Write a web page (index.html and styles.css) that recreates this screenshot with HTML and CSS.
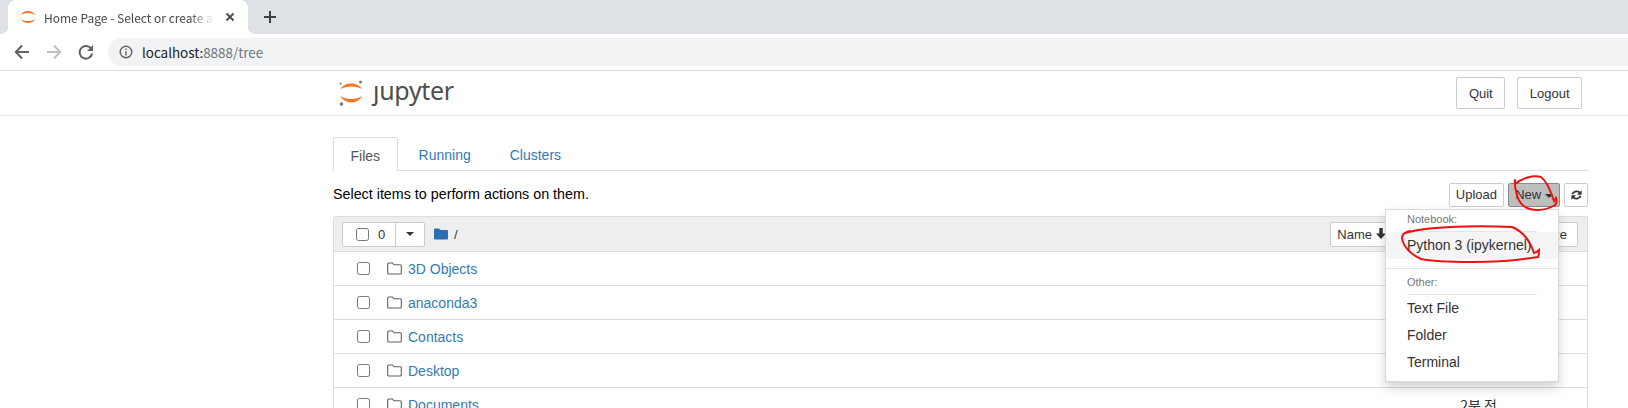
FILE: index.html
```html
<!DOCTYPE html>
<html lang="en">
<head>
  <meta charset="UTF-8">
  <title>Home Page - Select or create a notebook</title>
  <link rel="stylesheet" href="styles.css">
</head>
<body>
  <div class="tab-strip">
    <div class="browser-tab">
      <svg class="favicon" width="16" height="16" viewBox="0 0 16 16">
        <path d="M.8 6C3 .8 13 .8 15.200 6C12 3.300 4 3.300 .8 6Z" fill="#f37726"/>
        <path d="M.8 10C3 15.200 13 15.200 15.200 10C12 12.700 4 12.700 .8 10Z" fill="#f37726"/>
      </svg>
      <span class="browser-tab-title">Home Page - Select or create a notebook</span>
      <svg class="tab-close" width="10" height="10" viewBox="0 0 10 10">
        <path d="M1.500 1.500L8.500 8.500M8.500 1.500L1.500 8.500" stroke="#45494d" stroke-width="1.800"/>
      </svg>
    </div>
    <svg class="new-tab" width="14" height="14" viewBox="0 0 14 14">
      <path d="M7 1V13M1 7H13" stroke="#3c4043" stroke-width="2"/>
    </svg>
  </div>

  <div class="toolbar">
    <svg class="nav-icon" width="16" height="16" viewBox="0 0 16 16">
      <path d="M15 8H2M8 1.500L1.800 8L8 14.500" fill="none" stroke="#5f6368" stroke-width="2"/>
    </svg>
    <svg class="nav-icon" width="16" height="16" viewBox="0 0 16 16">
      <path d="M1 8H14M8 1.500L14.200 8L8 14.500" fill="none" stroke="#bdc1c6" stroke-width="2"/>
    </svg>
    <svg class="nav-icon nav-icon-last" width="16" height="16" viewBox="0 0 16 16">
      <path d="M13.500 5.200A6.300 6.300 0 1 0 14.200 9.500" fill="none" stroke="#5f6368" stroke-width="2"/>
      <path d="M15 1V7H9Z" fill="#5f6368"/>
    </svg>
    <div class="address-bar">
      <svg width="14" height="14" viewBox="0 0 14 14">
        <circle cx="7" cy="7" r="5.800" fill="none" stroke="#5f6368" stroke-width="1.400"/>
        <path d="M7 6.200V10.500M7 3.600V5" stroke="#5f6368" stroke-width="1.400"/>
      </svg>
      <span class="url"><span class="url-host">localhost:</span>8888/tree</span>
    </div>
  </div>

  <header class="site-header">
    <div class="logo">
      <svg width="28" height="30" viewBox="0 0 28 30">
        <path d="M2.500 11C6 3.500 20 3.500 24 11C19 7.500 7.500 7.500 2.500 11Z" fill="#f37726"/>
        <path d="M2.500 18C6.500 26.500 20 26.500 24 18C19 22 7.500 22 2.500 18Z" fill="#f37726"/>
        <circle cx="22.500" cy="4" r="1.500" fill="#767677"/>
        <circle cx="2.500" cy="5.500" r="1" fill="#767677"/>
        <circle cx="3.500" cy="26" r="1.800" fill="#767677"/>
      </svg>
      <span class="logo-text">ȷupyter</span>
    </div>
    <div class="header-buttons">
      <button class="btn btn-header">Quit</button>
      <button class="btn btn-header">Logout</button>
    </div>
  </header>

  <main class="page">
    <nav class="tabs">
      <a class="tab tab-active">Files</a>
      <a class="tab">Running</a>
      <a class="tab">Clusters</a>
    </nav>

    <div class="actions">
      <span class="actions-hint">Select items to perform actions on them.</span>
      <div class="action-buttons">
        <button class="btn btn-small btn-upload">Upload</button>
        <button class="btn btn-small btn-new">New <i class="caret"></i></button>
        <button class="btn btn-small btn-refresh">
          <svg width="16" height="16" viewBox="0 0 14 14">
            <path d="M1.800 6C3 2 9 1 11.500 4.500M12.200 8C11 12 5 13 2.500 9.500" fill="none" stroke="#333" stroke-width="2.400"/>
            <path d="M13.500 .8V6.800H7.500ZM.5 13.200V7.200H6.500Z" fill="#333"/>
          </svg>
        </button>
      </div>
    </div>

    <section class="file-list">
      <div class="list-header">
        <div class="select-group">
          <span class="select-count"><i class="check"></i>0</span>
          <span class="select-caret"><i class="caret"></i></span>
        </div>
        <svg width="14" height="12" viewBox="0 0 14 12">
          <path d="M0 1.500Q0 .5 1 .5H5L6.500 2H13Q14 2 14 3V10.500Q14 11.500 13 11.500H1Q0 11.500 0 10.500Z" fill="#2b6fb0"/>
        </svg>
        <span class="crumb">/</span>
        <div class="sort-buttons">
          <button class="btn btn-sort btn-name">Name
            <svg width="10" height="11" viewBox="0 0 10 11">
              <path d="M3.300 0H6.700V5.500H10L5 11L0 5.500H3.300Z" fill="#333"/>
            </svg>
          </button>
          <button class="btn btn-sort btn-modified"></button>
          <button class="btn btn-sort">File size</button>
        </div>
      </div>

      <div class="row"><i class="check"></i><svg class="folder" width="15" height="13" viewBox="0 0 15 13"><path d="M.7 2Q.7 1 1.700 1H5.500L7 2.800H13.300Q14.300 2.800 14.300 3.800V11Q14.300 12 13.300 12H1.700Q.7 12 .7 11Z" fill="none" stroke="#5f5f5f" stroke-width="1.100"/></svg><a class="file-link">3D Objects</a></div>
      <div class="row"><i class="check"></i><svg class="folder" width="15" height="13" viewBox="0 0 15 13"><path d="M.7 2Q.7 1 1.700 1H5.500L7 2.800H13.300Q14.300 2.800 14.300 3.800V11Q14.300 12 13.300 12H1.700Q.7 12 .7 11Z" fill="none" stroke="#5f5f5f" stroke-width="1.100"/></svg><a class="file-link">anaconda3</a></div>
      <div class="row"><i class="check"></i><svg class="folder" width="15" height="13" viewBox="0 0 15 13"><path d="M.7 2Q.7 1 1.700 1H5.500L7 2.800H13.300Q14.300 2.800 14.300 3.800V11Q14.300 12 13.300 12H1.700Q.7 12 .7 11Z" fill="none" stroke="#5f5f5f" stroke-width="1.100"/></svg><a class="file-link">Contacts</a></div>
      <div class="row"><i class="check"></i><svg class="folder" width="15" height="13" viewBox="0 0 15 13"><path d="M.7 2Q.7 1 1.700 1H5.500L7 2.800H13.300Q14.300 2.800 14.300 3.800V11Q14.300 12 13.300 12H1.700Q.7 12 .7 11Z" fill="none" stroke="#5f5f5f" stroke-width="1.100"/></svg><a class="file-link">Desktop</a></div>
      <div class="row"><i class="check"></i><svg class="folder" width="15" height="13" viewBox="0 0 15 13"><path d="M.7 2Q.7 1 1.700 1H5.500L7 2.800H13.300Q14.300 2.800 14.300 3.800V11Q14.300 12 13.300 12H1.700Q.7 12 .7 11Z" fill="none" stroke="#5f5f5f" stroke-width="1.100"/></svg><a class="file-link">Documents</a><span class="modified">2분 전</span></div>
    </section>

    <div class="new-menu">
      <div class="menu-label">Notebook:</div>
      <div class="menu-item menu-item-hover">Python 3 (ipykernel)</div>
      <div class="menu-divider"></div>
      <div class="menu-label menu-label-other">Other:</div>
      <div class="menu-item">Text File</div>
      <div class="menu-item">Folder</div>
      <div class="menu-item">Terminal</div>
    </div>
  </main>

  <!-- red marker scribbles on top of the screenshot -->
  <svg class="scribble" width="1628" height="408" viewBox="0 0 1628 408">
    <path d="M1515 184C1522 178 1533 175 1541 177C1547 181 1551 192 1554 201L1556 198C1557 201 1557 203 1555 205C1550 208 1545 210 1538 210C1528 210 1521 206 1518 198C1516 192 1514 186 1515 180" fill="none" stroke="#f01010" stroke-width="2" stroke-linecap="round"/>
    <path d="M1405 233C1425 227 1470 225 1512 227C1522 231 1530 241 1534 253C1536 253 1537 252 1539 250C1539 253 1539 255 1538 257C1520 260 1495 262 1472 262C1450 262 1430 261 1421 259C1410 254 1403 246 1402 238C1402 234 1405 232 1410 231" fill="none" stroke="#f01010" stroke-width="2" stroke-linecap="round"/>
  </svg>
</body>
</html>
```

FILE: styles.css
```css
html, body {
  margin: 0;
  height: 408px;
  overflow: hidden;
  background: #fff;
}
body {
  font-family: "Liberation Sans", Arial, sans-serif;
  font-size: 14px;
  color: #333;
}
button {
  font-family: inherit;
}

/* browser chrome */
.tab-strip {
  height: 34px;
  background: #dee1e6;
  display: flex;
  align-items: flex-end;
  padding-left: 8px;
}
.browser-tab {
  position: relative;
  width: 240px;
  height: 34px;
  box-sizing: border-box;
  background: #fff;
  border-radius: 8px 8px 0 0;
  display: flex;
  align-items: center;
  padding: 0 13px 0 12px;
}
.browser-tab::before,
.browser-tab::after {
  content: "";
  position: absolute;
  bottom: 0;
  width: 8px;
  height: 8px;
}
.browser-tab::before {
  left: -8px;
  background: radial-gradient(circle at 0 0, #dee1e6 8px, #fff 8.500px);
}
.browser-tab::after {
  right: -8px;
  background: radial-gradient(circle at 100% 0, #dee1e6 8px, #fff 8.500px);
}
.favicon {
  flex: none;
}
.browser-tab-title {
  flex: 1;
  min-width: 0;
  margin-left: 8px;
  font-family: "Noto Sans CJK KR", "Noto Sans", sans-serif;
  font-size: 12px;
  color: #45494d;
  white-space: nowrap;
  overflow: hidden;
  -webkit-mask-image: linear-gradient(to right, #000 85%, transparent 100%);
  mask-image: linear-gradient(to right, #000 85%, transparent 100%);
}
.tab-close {
  flex: none;
  margin-left: 10px;
}
.new-tab {
  margin: 0 0 10px 15px;
}
.toolbar {
  height: 37px;
  box-sizing: border-box;
  border-bottom: 1px solid #dadce0;
  display: flex;
  align-items: center;
  padding: 0 0 1px 14px;
}
.nav-icon {
  margin-right: 16px;
}
.nav-icon-last {
  margin-right: 14px;
}
.address-bar {
  flex: 1;
  height: 28px;
  background: #f1f3f4;
  border-radius: 14px 0 0 14px;
  display: flex;
  align-items: center;
  padding-left: 11px;
  gap: 9px;
}
.url {
  font-family: "Noto Sans CJK KR", "Noto Sans", sans-serif;
  font-size: 13.400px;
  color: #70757a;
}
.url-host {
  color: #202124;
}

/* notebook header */
.site-header {
  height: 44px;
  border-bottom: 1px solid #e7e7e7;
  display: flex;
  align-items: center;
  justify-content: space-between;
  padding: 0 46px 0 338px;
}
.logo {
  display: flex;
  align-items: center;
  gap: 7px;
}
.logo-text {
  font-family: "Noto Sans", sans-serif;
  font-size: 25px;
  letter-spacing: -.3px;
  line-height: 30px;
  color: #4e4e4e;
  margin-top: -6px;
}
.header-buttons {
  display: flex;
  gap: 12px;
}
.btn {
  background: #fff;
  border: 1px solid #ccc;
  border-radius: 2px;
  color: #333;
  font-size: 13px;
  padding: 0;
}
.btn-header {
  height: 32px;
  padding: 0 11.500px;
}

/* main content */
.page {
  position: relative;
  width: 1255px;
  margin-left: 333px;
  padding-top: 21px;
}
.tabs {
  display: flex;
  height: 33px;
  border-bottom: 1px solid #ddd;
}
.tab {
  height: 34px;
  box-sizing: border-box;
  padding: 0 18px;
  line-height: 36px;
  color: #337ab7;
  font-size: 14px;
  margin-right: 3px;
}
.tab-active {
  border: 1px solid #ddd;
  border-bottom: 1px solid #fff;
  border-radius: 2px 2px 0 0;
  color: #555;
  padding: 0 16.500px;
  background: #fff;
}
.actions {
  height: 45px;
  display: flex;
  align-items: center;
  justify-content: space-between;
  color: #000;
}
.actions-hint {
  font-size: 14.300px;
}
.action-buttons {
  display: flex;
  gap: 4px;
  margin-top: 2px;
}
.btn-small {
  height: 24px;
  padding: 0 5.500px;
}
.btn-upload {
  padding: 0 6px;
}
.btn-new {
  background: #bebebe;
  border-color: #8c8c8c;
  width: 52px;
}
.btn-refresh {
  width: 24px;
  display: flex;
  align-items: center;
  justify-content: center;
}
.caret {
  display: inline-block;
  border-top: 4px solid #333;
  border-left: 4px solid transparent;
  border-right: 4px solid transparent;
  vertical-align: middle;
}
.file-list {
  border: 1px solid #ddd;
  border-bottom: 0;
  border-radius: 2px 2px 0 0;
}
.list-header {
  height: 35px;
  box-sizing: border-box;
  background: #eee;
  border-bottom: 1px solid #ddd;
  display: flex;
  align-items: center;
  padding: 0 9px 0 8px;
  font-size: 13px;
}
.select-group {
  display: flex;
  height: 23px;
  background: #fff;
  border: 1px solid #ccc;
  border-radius: 2px;
  margin-right: 9px;
}
.select-count {
  width: 53px;
  display: flex;
  align-items: center;
  padding-left: 13px;
  box-sizing: border-box;
  gap: 9px;
  border-right: 1px solid #ccc;
}
.select-caret {
  width: 28px;
  display: flex;
  align-items: center;
  justify-content: center;
}
.crumb {
  margin-left: 6px;
  color: #333;
}
.sort-buttons {
  margin-left: auto;
  display: flex;
}
.btn-sort {
  height: 25px;
  padding: 0 10px 0 9px;
  margin-left: -1px;
}
.btn-name {
  width: 68px;
  padding: 0 0 0 6px;
  text-align: left;
}
.btn-modified {
  width: 113px;
}
.check {
  display: block;
  width: 11px;
  height: 11px;
  background: #fff;
  border: 1px solid #767676;
  border-radius: 2.500px;
  flex: none;
}
.row {
  height: 34px;
  box-sizing: border-box;
  border-bottom: 1px solid #ddd;
  display: flex;
  align-items: center;
  padding-left: 23px;
}
.folder {
  margin-left: 17px;
}
.file-link {
  margin-left: 6px;
  color: #337ab7;
  font-size: 14px;
}
.modified {
  margin-left: auto;
  margin-right: 90px;
  font-family: "Noto Sans CJK KR", sans-serif;
  font-size: 14px;
}

/* dropdown menu, over the list */
.new-menu {
  position: absolute;
  top: 93px;
  right: 29px;
  width: 174px;
  height: 173px;
  box-sizing: border-box;
  background: #fff;
  border: 1px solid rgba(0, 0, 0, .15);
  border-radius: 2px;
  box-shadow: 0 6px 12px rgba(0, 0, 0, .175);
  padding-top: 4px;
  color: #333;
}
.menu-label {
  margin: 0 21px;
  height: 18px;
  line-height: 11px;
  font-size: 11px;
  color: #777;
  border-bottom: 1px solid #e5e5e5;
  box-sizing: border-box;
}
.menu-label-other {
  height: 26px;
  line-height: 26px;
}
.menu-item {
  height: 27px;
  line-height: 27px;
  padding-left: 21px;
  font-size: 14px;
}
.menu-item-hover {
  background: #f5f5f5;
}
.menu-divider {
  height: 1px;
  background: #e5e5e5;
  margin: 9px 0 0;
}
.scribble {
  position: absolute;
  top: 0;
  left: 0;
  pointer-events: none;
}
```
